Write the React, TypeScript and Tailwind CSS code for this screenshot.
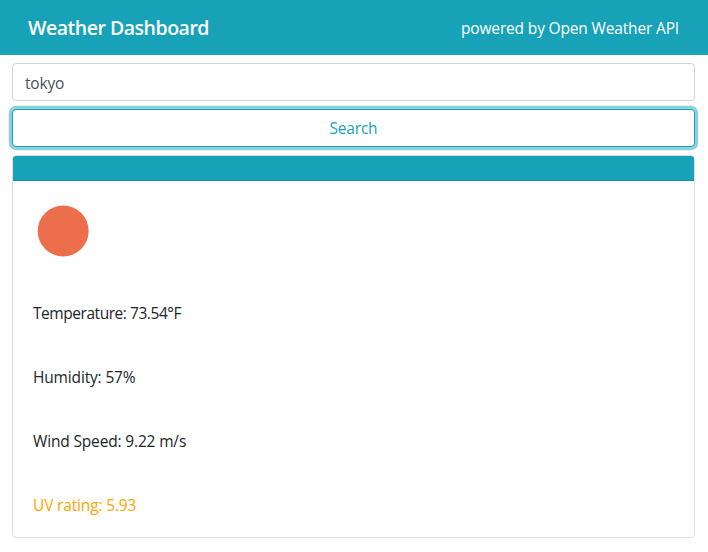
export default function App() {
  return (
    <div className="h-[552px] w-[708px] overflow-hidden bg-white font-['Open_Sans',sans-serif] text-[15.5px] leading-6 tracking-[-0.16px] text-[#212529]">
      <header className="flex h-[55px] items-center justify-between bg-[#17a2b8] pr-[29px] pl-[28px] text-white">
        <h1 className="text-[19.5px] font-semibold tracking-[-0.48px] whitespace-nowrap">Weather Dashboard</h1>
        <p className="whitespace-nowrap">powered by Open Weather API</p>
      </header>
      <main className="flex flex-col gap-2 pt-2 pr-[13px] pl-3">
        <input aria-label="City" className="h-[38px] w-full rounded border border-[#ced4da] bg-white px-3 pt-[2px] tracking-[-0.16px] text-[#495057] outline-none" defaultValue="tokyo" />
        <button className="h-[38px] w-full rounded border border-[#17a2b8] bg-white tracking-[-0.2px] text-[#17a2b8] shadow-[0_0_0_3.2px_rgba(23,162,184,0.5)]">Search</button>
        <section className="h-[383px] overflow-hidden rounded border border-[#dfdfdf]">
          <div className="h-[25px] border-b border-[#148ea1] bg-[#17a2b8]" />
          <svg className="ml-5 size-[100px]" viewBox="0 0 100 100">
            <defs>
              <filter id="sun-edge">
                <feGaussianBlur stdDeviation="0.7" />
              </filter>
            </defs>
            <circle cx="30.2" cy="50" r="25.5" fill="#ec6e4c" filter="url(#sun-edge)" />
          </svg>
          <div className="flex flex-col gap-10 pt-5 pl-5">
            <p className="tracking-[-0.45px]">Temperature: 73.54°F</p>
            <p>Humidity: 57%</p>
            <p>Wind Speed: 9.22 m/s</p>
            <p className="text-[#ffa500]">UV rating: 5.93</p>
          </div>
        </section>
      </main>
    </div>
  );
}
